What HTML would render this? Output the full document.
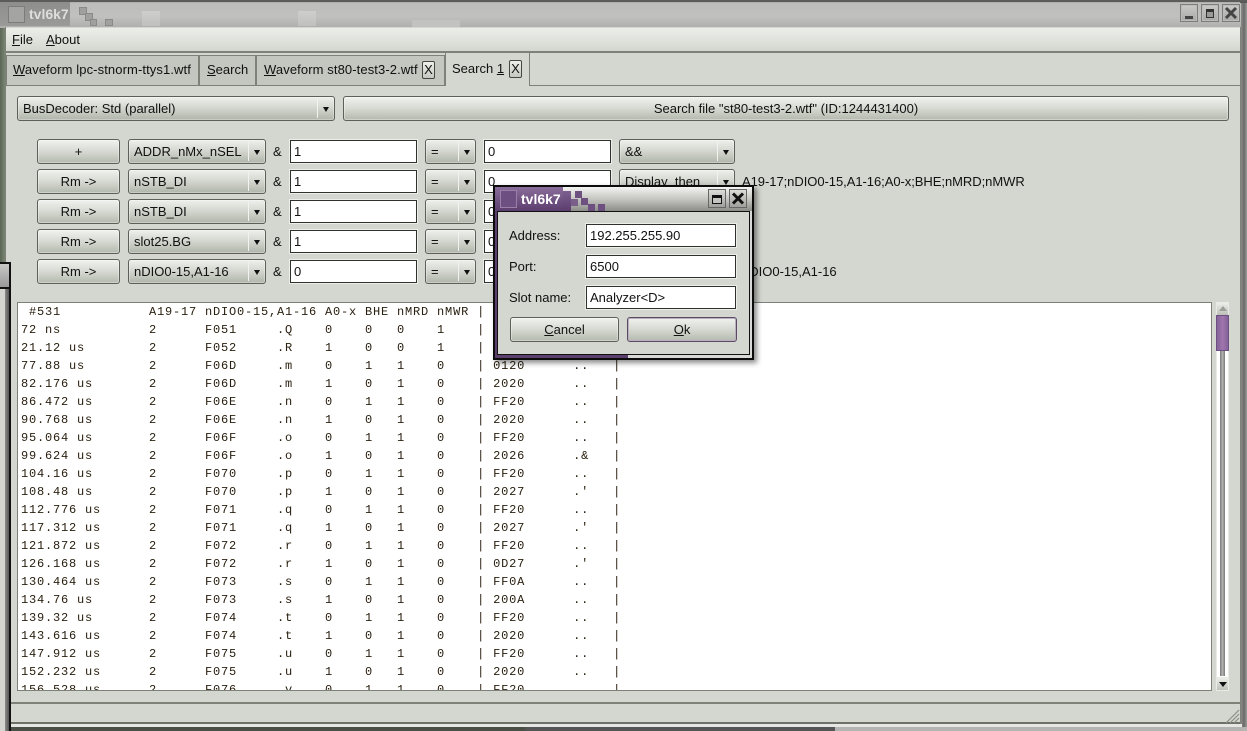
<!DOCTYPE html>
<html><head><meta charset="utf-8"><style>
*{box-sizing:border-box}
html,body{margin:0;padding:0;width:1247px;height:731px;overflow:hidden;background:#8c8c8a;font-family:"Liberation Sans",sans-serif;font-size:13px;color:#111}
.a{position:absolute}
u{text-decoration:underline}
.btn{position:absolute;height:25px;border:1px solid #5c6058;border-radius:3px;background:linear-gradient(#f0f2ee,#d9dcd5 45%,#b4b9ae);text-align:center;line-height:23px;box-shadow:inset 0 0 0 1px rgba(255,255,255,.35)}
.cb{position:absolute;height:25px;border:1px solid #5c6058;border-radius:3px;background:linear-gradient(#eef0ec,#d5d8d0 45%,#b0b5aa);line-height:23px;padding-left:5px;white-space:nowrap;box-shadow:inset 0 0 0 1px rgba(255,255,255,.3)}
.cb i{position:absolute;right:16px;top:2px;bottom:2px;width:1px;background:#f2f3f0}
.cb b{position:absolute;right:5px;top:10px;width:0;height:0;border-left:3px solid transparent;border-right:3px solid transparent;border-top:5px solid #111}
.in{position:absolute;height:23px;border:1px solid #2f312c;background:#fff;line-height:21px;padding-left:3px;box-shadow:0 0 0 1px #eceee9;white-space:nowrap}
.tab{position:absolute;top:55px;height:30px;background:#c3c7bf;border:1px solid #7d8178;border-bottom:0;line-height:28px;padding-left:6px;white-space:nowrap;font-size:13px;letter-spacing:.1px}
.x{position:absolute;width:13px;height:18px;border:1px solid #44463f;border-radius:2px;background:linear-gradient(#eff0ec,#c4c8c0);line-height:15px;text-align:center;font-size:13px}
.wb{position:absolute;width:18px;height:18px;background:linear-gradient(#cacac8,#a8a8a6);border:1px solid #7c7c7a;box-shadow:inset 0 0 0 1px #bcbcba}
.row{position:absolute;left:3px;font:12px/18px "Liberation Mono",monospace;letter-spacing:.8px;white-space:pre;color:#2a2010}
</style></head><body>

<!-- outer title bar -->
<div class="a" style="left:0;top:0;width:1247px;height:28px;background:linear-gradient(#6e6e6c 0,#bdbdbb 3px,#c0c0be 60%,#aeaeac)"></div>
<div class="a" style="left:142px;top:11px;width:18px;height:15px;background:linear-gradient(#cfcfcd,#c0c0be)"></div>
<div class="a" style="left:298px;top:11px;width:18px;height:15px;background:linear-gradient(#cfcfcd,#c0c0be)"></div>
<div class="a" style="left:412px;top:20px;width:48px;height:7px;background:#c2c2c0"></div>
<div class="a" style="left:0;top:2px;width:70px;height:24px;background:linear-gradient(#8e8e8c,#9a9a98)"></div>
<div class="a" style="left:8px;top:6px;width:17px;height:17px;background:#a4a4a2;border:1px solid #7c7c7a"></div>
<div class="a" style="left:29px;top:5px;font:bold 14px/18px 'Liberation Sans',sans-serif;color:#dededc">tvl6k7</div>
<div class="a" style="left:79px;top:7px;width:8px;height:8px;background:#a0a09e;border:1px solid #8a8a88"></div>
<div class="a" style="left:85px;top:13px;width:8px;height:8px;background:#a0a09e;border:1px solid #8a8a88"></div>
<div class="a" style="left:90px;top:19px;width:7px;height:7px;background:#a0a09e;border:1px solid #8a8a88"></div>
<div class="a" style="left:105px;top:19px;width:8px;height:7px;background:#a0a09e;border:1px solid #8a8a88"></div>
<div class="wb" style="left:1180px;top:4px"><div class="a" style="left:4px;top:11px;width:8px;height:3px;background:#444"></div></div>
<div class="wb" style="left:1201px;top:4px"><div class="a" style="left:4px;top:4px;width:8px;height:9px;background:#9a9a98;border:1px solid #333;border-top:3px solid #333"></div></div>
<div class="wb" style="left:1222px;top:4px"><svg class="a" style="left:1px;top:1px" width="14" height="14" viewBox="0 0 14 14"><path d="M2 2L12 12M12 2L2 12" stroke="#444" stroke-width="3" fill="none"/></svg></div>

<!-- main window -->
<div class="a" style="left:0;top:28px;width:5px;height:234px;background:linear-gradient(90deg,#5c6654,#7a8472)"></div>
<div class="a" style="left:5px;top:27px;width:1236px;height:704px;background:#d4d7d0;border-left:1px solid #7d8178;border-right:1px solid #7d8178"></div>
<div class="a" style="left:1241px;top:0;width:6px;height:731px;background:linear-gradient(90deg,#8c8c8a,#6a6a68 50%,#9c9c9a)"></div>
<div class="a" style="left:1240px;top:0;width:7px;height:3px;background:#555"></div>
<div class="a" style="left:0;top:0;width:1247px;height:2px;background:#5c5c5a"></div>

<!-- menu -->
<div class="a" style="left:6px;top:28px;width:1234px;height:25px;background:linear-gradient(#eceee9,#d4d7d0);border-bottom:2px solid #7d8178"></div>
<div class="a" style="left:12px;top:32px;line-height:16px;font-size:13px"><u>F</u>ile</div>
<div class="a" style="left:46px;top:32px;line-height:16px;font-size:13px"><u>A</u>bout</div>

<!-- tabs -->
<div class="tab" style="left:6px;width:193px"><u>W</u>aveform lpc-stnorm-ttys1.wtf</div>
<div class="tab" style="left:199px;width:57px;padding-left:7px;letter-spacing:0"><u>S</u>earch</div>
<div class="tab" style="left:256px;width:189px;padding-left:7px"><u>W</u>aveform st80-test3-2.wtf</div>
<div class="x" style="left:422px;top:61px">X</div>
<div class="a" style="left:445px;top:52px;width:85px;height:34px;background:#d4d7d0;border:1px solid #7d8178;border-bottom:0;line-height:31px;padding-left:6px;white-space:nowrap;font-size:13px;z-index:2">Search <u>1</u></div>
<div class="x" style="left:509px;top:60px;z-index:3">X</div>
<div class="a" style="left:6px;top:85px;width:1234px;height:1px;background:#7d8178"></div>

<!-- top combos -->
<div class="cb" style="left:17px;top:96px;width:318px">BusDecoder: Std (parallel)<i></i><b></b></div>
<div class="btn" style="left:343px;top:96px;width:886px">Search file "st80-test3-2.wtf" (ID:1244431400)</div>

<!-- filter rows -->
<div class="btn" style="left:37px;top:139px;width:83px">+</div>
<div class="cb" style="left:128px;top:139px;width:138px">ADDR_nMx_nSEL<i></i><b></b></div>
<div class="a" style="left:273px;top:144px">&amp;</div>
<div class="in" style="left:290px;top:140px;width:127px">1</div>
<div class="cb" style="left:425px;top:139px;width:51px">=<i></i><b></b></div>
<div class="in" style="left:484px;top:140px;width:127px">0</div>
<div class="cb" style="left:619px;top:139px;width:116px">&amp;&amp;<i></i><b></b></div>

<div class="btn" style="left:37px;top:169px;width:83px">Rm -&gt;</div>
<div class="cb" style="left:128px;top:169px;width:138px">nSTB_DI<i></i><b></b></div>
<div class="a" style="left:273px;top:174px">&amp;</div>
<div class="in" style="left:290px;top:170px;width:127px">1</div>
<div class="cb" style="left:425px;top:169px;width:51px">=<i></i><b></b></div>
<div class="in" style="left:484px;top:170px;width:127px">0</div>
<div class="cb" style="left:619px;top:169px;width:116px">Display_then<i></i><b></b></div>
<div class="a" style="left:742px;top:174px;white-space:nowrap;letter-spacing:-.05px">A19-17;nDIO0-15,A1-16;A0-x;BHE;nMRD;nMWR</div>

<div class="btn" style="left:37px;top:199px;width:83px">Rm -&gt;</div>
<div class="cb" style="left:128px;top:199px;width:138px">nSTB_DI<i></i><b></b></div>
<div class="a" style="left:273px;top:204px">&amp;</div>
<div class="in" style="left:290px;top:200px;width:127px">1</div>
<div class="cb" style="left:425px;top:199px;width:51px">=<i></i><b></b></div>
<div class="in" style="left:484px;top:200px;width:127px">0</div>

<div class="btn" style="left:37px;top:229px;width:83px">Rm -&gt;</div>
<div class="cb" style="left:128px;top:229px;width:138px">slot25.BG<i></i><b></b></div>
<div class="a" style="left:273px;top:234px">&amp;</div>
<div class="in" style="left:290px;top:230px;width:127px">1</div>
<div class="cb" style="left:425px;top:229px;width:51px">=<i></i><b></b></div>
<div class="in" style="left:484px;top:230px;width:127px">0</div>

<div class="btn" style="left:37px;top:259px;width:83px">Rm -&gt;</div>
<div class="cb" style="left:128px;top:259px;width:138px">nDIO0-15,A1-16<i></i><b></b></div>
<div class="a" style="left:273px;top:264px">&amp;</div>
<div class="in" style="left:290px;top:260px;width:127px">0</div>
<div class="cb" style="left:425px;top:259px;width:51px">=<i></i><b></b></div>
<div class="in" style="left:484px;top:260px;width:127px">0</div>
<div class="a" style="left:742px;top:264px;white-space:nowrap">nDIO0-15,A1-16</div>

<!-- table -->
<div class="a" style="left:17px;top:302px;width:1195px;height:389px;background:#fff;border:1px solid #7d8178;overflow:hidden">
<div class="row" style="top:0"> #531           A19-17 nDIO0-15,A1-16 A0-x BHE nMRD nMWR | </div>
<div class="row" style="top:18px">72 ns           2      F051     .Q    0    0   0    1    | </div>
<div class="row" style="top:36px">21.12 us        2      F052     .R    1    0   0    1    | </div>
<div class="row" style="top:54px">77.88 us        2      F06D     .m    0    1   1    0    | 0120      ..   |</div>
<div class="row" style="top:72px">82.176 us       2      F06D     .m    1    0   1    0    | 2020      ..   |</div>
<div class="row" style="top:90px">86.472 us       2      F06E     .n    0    1   1    0    | FF20      ..   |</div>
<div class="row" style="top:108px">90.768 us       2      F06E     .n    1    0   1    0    | 2020      ..   |</div>
<div class="row" style="top:126px">95.064 us       2      F06F     .o    0    1   1    0    | FF20      ..   |</div>
<div class="row" style="top:144px">99.624 us       2      F06F     .o    1    0   1    0    | 2026      .&amp;   |</div>
<div class="row" style="top:162px">104.16 us       2      F070     .p    0    1   1    0    | FF20      ..   |</div>
<div class="row" style="top:180px">108.48 us       2      F070     .p    1    0   1    0    | 2027      .'   |</div>
<div class="row" style="top:198px">112.776 us      2      F071     .q    0    1   1    0    | FF20      ..   |</div>
<div class="row" style="top:216px">117.312 us      2      F071     .q    1    0   1    0    | 2027      .'   |</div>
<div class="row" style="top:234px">121.872 us      2      F072     .r    0    1   1    0    | FF20      ..   |</div>
<div class="row" style="top:252px">126.168 us      2      F072     .r    1    0   1    0    | 0D27      .'   |</div>
<div class="row" style="top:270px">130.464 us      2      F073     .s    0    1   1    0    | FF0A      ..   |</div>
<div class="row" style="top:288px">134.76 us       2      F073     .s    1    0   1    0    | 200A      ..   |</div>
<div class="row" style="top:306px">139.32 us       2      F074     .t    0    1   1    0    | FF20      ..   |</div>
<div class="row" style="top:324px">143.616 us      2      F074     .t    1    0   1    0    | 2020      ..   |</div>
<div class="row" style="top:342px">147.912 us      2      F075     .u    0    1   1    0    | FF20      ..   |</div>
<div class="row" style="top:360px">152.232 us      2      F075     .u    1    0   1    0    | 2020      ..   |</div>
<div class="row" style="top:378px">156.528 us      2      F076     .v    0    1   1    0    | FF20      ..   |</div>
</div>

<!-- scrollbar -->
<div class="a" style="left:1216px;top:302px;width:13px;height:389px;background:#fff;border:1px solid #e8eae5"></div>
<div class="a" style="left:1220px;top:316px;width:5px;height:360px;background:linear-gradient(90deg,#777,#b5b5b2,#777)"></div>
<div class="a" style="left:1216px;top:302px;width:13px;height:14px;background:linear-gradient(#eceee9,#bcc0b8);border:1px solid #e8eae5"><div class="a" style="left:2px;top:3px;width:0;height:0;border-left:4px solid transparent;border-right:4px solid transparent;border-bottom:5px solid #9a9e96"></div></div>
<div class="a" style="left:1216px;top:315px;width:13px;height:36px;background:linear-gradient(90deg,#83629a,#a076ac 50%,#83629a);border:1px solid #6e4f82"></div>
<div class="a" style="left:1216px;top:677px;width:13px;height:14px;background:linear-gradient(#eceee9,#bcc0b8);border:1px solid #e8eae5"><div class="a" style="left:2px;top:4px;width:0;height:0;border-left:4px solid transparent;border-right:4px solid transparent;border-top:5px solid #111"></div></div>

<!-- status bar -->
<div class="a" style="left:6px;top:702px;width:1234px;height:2px;background:#7d8178"></div>
<div class="a" style="left:6px;top:704px;width:1234px;height:20px;background:#d4d7d0;border-bottom:2px solid #6d7168"></div>
<svg class="a" style="left:1225px;top:707px" width="15" height="17" viewBox="0 0 15 17"><path d="M1 16L14 3M5 16L14 7M9 16L14 11" stroke="#8a8e86" stroke-width="1.2" fill="none"/></svg>
<div class="a" style="left:6px;top:724px;width:1236px;height:3px;background:#e6e7e4"></div>
<div class="a" style="left:10px;top:727px;width:515px;height:4px;background:#4a5045"></div>
<div class="a" style="left:525px;top:727px;width:310px;height:4px;background:#555"></div>
<div class="a" style="left:835px;top:727px;width:412px;height:4px;background:#b4b4b2"></div>

<!-- left background window -->
<div class="a" style="left:0;top:262px;width:11px;height:469px;background:#d4d4d0;border-top:2px solid #111;border-right:2px solid #111"></div>
<div class="a" style="left:0;top:264px;width:9px;height:25px;background:linear-gradient(#c8c8c6,#999);border-bottom:2px solid #111"></div>
<div class="a" style="left:5px;top:289px;width:4px;height:442px;background:linear-gradient(90deg,#8c8c8a,#555)"></div>

<!-- dialog shadow + frame -->
<div class="a" style="left:493px;top:185px;width:261px;height:175px;background:#5d3f6e;border:2px solid #0c0c0c;box-shadow:3px 3px 5px rgba(0,0,0,.45)"></div>
<div class="a" style="left:628px;top:355px;width:124px;height:3px;background:#d8d8d6"></div>
<div class="a" style="left:750px;top:211px;width:2px;height:147px;background:#d8d8d6"></div>
<div class="a" style="left:495px;top:187px;width:257px;height:24px;background:linear-gradient(#f4f4f2,#c0c0bc 55%,#8c8c88)"></div>
<div class="a" style="left:495px;top:187px;width:68px;height:24px;background:linear-gradient(#8a6d9a,#5c3e6e)"></div>
<div class="a" style="left:563px;top:191px;width:8px;height:20px;background:linear-gradient(#7c5f8e,#5c3e6e)"></div>
<div class="a" style="left:575px;top:191px;width:7px;height:7px;background:#6d4f80"></div>
<div class="a" style="left:581px;top:198px;width:7px;height:7px;background:#6d4f80"></div>
<div class="a" style="left:571px;top:199px;width:7px;height:7px;background:#7a5f8a"></div>
<div class="a" style="left:588px;top:204px;width:7px;height:7px;background:#6d4f80"></div>
<div class="a" style="left:598px;top:204px;width:7px;height:7px;background:#6d4f80"></div>
<div class="a" style="left:500px;top:190px;width:17px;height:18px;background:#6e4f82;border:1px solid #9a80a8"></div>
<div class="a" style="left:521px;top:189px;font:bold 14px/20px 'Liberation Sans',sans-serif;color:#fff">tvl6k7</div>
<div class="a" style="left:708px;top:189px;width:18px;height:19px;background:linear-gradient(#dcdcd8,#a0a09c);border:1px solid #666"><div class="a" style="left:3px;top:5px;width:10px;height:9px;background:#c4c4c0;border:1px solid #111;border-top:3px solid #111"></div></div>
<div class="a" style="left:729px;top:189px;width:18px;height:19px;background:linear-gradient(#dcdcd8,#a0a09c);border:1px solid #666"><svg class="a" style="left:1px;top:1px" width="14" height="15" viewBox="0 0 14 15"><path d="M2 2.5L12 12.5M12 2.5L2 12.5" stroke="#111" stroke-width="3" fill="none"/></svg></div>

<div class="a" style="left:497px;top:211px;width:253px;height:144px;background:#d4d7d0;border:1px solid #111"></div>
<div class="a" style="left:509px;top:228px;line-height:15px">Address:</div>
<div class="a" style="left:509px;top:259px;line-height:15px">Port:</div>
<div class="a" style="left:509px;top:290px;line-height:15px">Slot name:</div>
<div class="in" style="left:586px;top:224px;width:150px">192.255.255.90</div>
<div class="in" style="left:586px;top:255px;width:150px">6500</div>
<div class="in" style="left:586px;top:286px;width:150px">Analyzer&lt;D&gt;</div>
<div class="btn" style="left:510px;top:317px;width:109px"><u>C</u>ancel</div>
<div class="btn" style="left:627px;top:317px;width:110px;border-color:#5d4a66;box-shadow:inset 0 0 0 1px #b8b0bc"><u>O</u>k</div>
</body></html>
